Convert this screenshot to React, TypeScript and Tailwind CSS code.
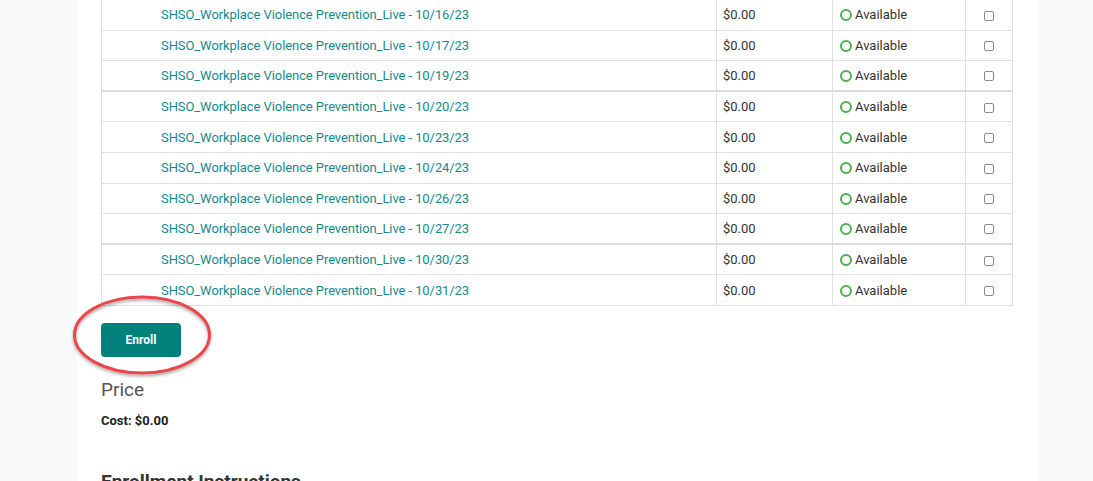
import React from "react";

const dates = [
  "10/16/23",
  "10/17/23",
  "10/19/23",
  "10/20/23",
  "10/23/23",
  "10/24/23",
  "10/26/23",
  "10/27/23",
  "10/30/23",
  "10/31/23",
];

const thick = new Set([2, 7]);

export default function App() {
  return (
    <div
      className="h-[481px] overflow-hidden bg-[#f8f9fb] flex pl-[77px]"
      style={{ fontFamily: "Roboto, 'Liberation Sans', sans-serif" }}
    >
      <div className="w-[960px] bg-white px-[24px] relative">
        <div className="border-l border-r border-[#dddddd] w-[912px]">
          {dates.map((d, i) => (
            <div
              key={d}
              className={
                "grid grid-cols-[614px_116px_133px_47px] h-[30.6px] text-[13px] leading-[18px] " +
                (thick.has(i)
                  ? "border-b-2 border-[#dcdcdc]"
                  : "border-b border-[#e0e0e0]")
              }
            >
              <div className="flex items-center pl-[59px] pt-[1px]">
                <a className="text-[#158a8e] no-underline cursor-pointer tracking-[-0.08px]">
                  SHSO_Workplace Violence Prevention_Live - {d}
                </a>
              </div>
              <div className="flex items-center pl-[6px] pt-[1px] border-l border-[#e0e0e0] text-[#333333]">
                $0.00
              </div>
              <div className="flex items-center pl-[7px] pt-[1px] border-l border-[#e0e0e0] text-[#333333]">
                <span className="inline-block w-[12px] h-[12px] rounded-full border-2 border-[#4caf50] mr-[3px]" />
                Available
              </div>
              <div className="flex items-center justify-center border-l border-[#e0e0e0]">
                <span className="inline-block w-[10px] h-[10px] rounded-[2px] border border-[#8a8a8a] bg-white mt-[2px]" />
              </div>
            </div>
          ))}
        </div>

        <div className="mt-[17px] relative">
          <button className="w-[80px] h-[34px] rounded-[4px] bg-[#00807a] text-white text-[12px] font-bold">
            Enroll
          </button>
          <svg
            className="absolute left-[-30px] top-[-28px] pointer-events-none"
            width="144"
            height="88"
            viewBox="0 0 144 88"
          >
            <defs>
              <filter id="sh" x="-20%" y="-20%" width="140%" height="150%">
                <feDropShadow dx="0" dy="2" stdDeviation="1.5" floodColor="#000" floodOpacity="0.35" />
              </filter>
            </defs>
            <ellipse
              cx="71"
              cy="40"
              rx="67.5"
              ry="38"
              fill="none"
              stroke="#e8474b"
              strokeWidth="3"
              filter="url(#sh)"
            />
          </svg>
        </div>

        <div className="mt-[21px] text-[19px] leading-[24px] text-[#555555] font-normal">
          Price
        </div>
        <div className="mt-[11px] text-[13px] leading-[16px] font-bold text-[#222222]">
          Cost: $0.00
        </div>
        <div className="mt-[42px] text-[19px] leading-[22px] font-bold text-[#333333]">
          Enrollment Instructions
        </div>
      </div>
    </div>
  );
}
